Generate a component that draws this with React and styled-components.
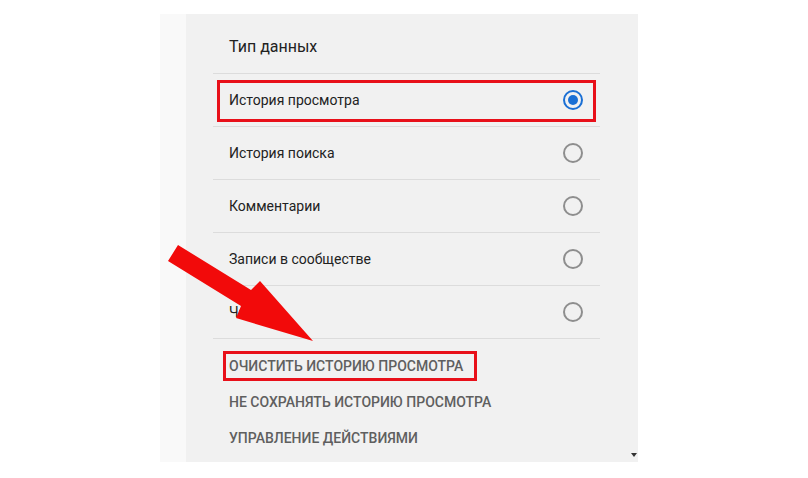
import React from "react";
import styled, { createGlobalStyle } from "styled-components";

const GlobalStyle = createGlobalStyle`
  html, body {
    margin: 0;
    padding: 0;
    background: #ffffff;
    font-family: Roboto, "Noto Sans", Arial, sans-serif;
  }
`;

const Page = styled.div`
  position: relative;
  width: 808px;
  height: 478px;
  padding: 14px 0 0 160px;
  box-sizing: border-box;
  overflow: hidden;
`;

const Panel = styled.div`
  position: relative;
  display: flex;
  width: 478px;
  height: 448px;
`;

const Strip = styled.div`
  width: 26px;
  background: #f9f9f9;
`;

const Main = styled.div`
  flex: 1;
  background: #f1f1f1;
  padding: 0 38px 0 27px;
  box-sizing: border-box;
`;

const Header = styled.div`
  height: 59px;
  display: flex;
  align-items: center;
  padding: 5px 16px 0;
  box-sizing: border-box;
  font-size: 16px;
  color: #222;
`;

const Row = styled.label`
  position: relative;
  height: 53px;
  display: flex;
  align-items: center;
  justify-content: space-between;
  padding: 0 17px 0 16px;
  border-top: 1px solid #dcdcdc;
  box-sizing: border-box;
  font-size: 14px;
  color: #222;

  ${(p) =>
    p.$marked &&
    `
    &::after {
      content: "";
      position: absolute;
      left: 4px;
      right: 4px;
      top: 6px;
      bottom: 4px;
      border: 3px solid #e8101a;
    }
  `}
`;

const LastRow = styled(Row)`
  border-bottom: 1px solid #dcdcdc;
  height: 54px;
`;

const Radio = styled.span`
  width: 20px;
  height: 20px;
  border-radius: 50%;
  box-sizing: border-box;
  border: ${(p) => (p.$on ? "2.5px solid #1a6fd4" : "2px solid #8e8e8e")};
  display: flex;
  align-items: center;
  justify-content: center;

  &::before {
    content: "";
    width: 10px;
    height: 10px;
    border-radius: 50%;
    background: ${(p) => (p.$on ? "#1a6fd4" : "transparent")};
  }
`;

const Actions = styled.div`
  display: flex;
  flex-direction: column;
  align-items: flex-start;
  padding: 9px 16px 0;
`;

const Action = styled.span`
  position: relative;
  height: 36px;
  line-height: 36px;
  font-size: 14px;
  font-weight: 500;
  color: #5f5f5f;
  text-transform: uppercase;

  ${(p) =>
    p.$marked &&
    `
    &::after {
      content: "";
      position: absolute;
      left: -6px;
      right: -14px;
      top: 3px;
      bottom: 3px;
      border: 3px solid #e8101a;
    }
  `}
`;

const ScrollArrow = styled.span`
  position: absolute;
  right: 1px;
  bottom: 5px;
  width: 0;
  height: 0;
  border-left: 3px solid transparent;
  border-right: 3px solid transparent;
  border-top: 4px solid #333;
`;

const Pointer = styled.svg`
  position: absolute;
  left: 0;
  top: 0;
  pointer-events: none;
`;

const types = [
  { label: "История просмотра", on: true },
  { label: "История поиска" },
  { label: "Комментарии" },
  { label: "Записи в сообществе" },
];

export default function App() {
  return (
    <>
      <GlobalStyle />
      <Page>
        <Panel>
          <Strip />
          <Main>
            <Header>Тип данных</Header>
            {types.map((t) => (
              <Row key={t.label} $marked={t.on}>
                {t.label}
                <Radio $on={t.on} />
              </Row>
            ))}
            <LastRow>
              Чаты
              <Radio />
            </LastRow>
            <Actions>
              <Action $marked>Очистить историю просмотра</Action>
              <Action>Не сохранять историю просмотра</Action>
              <Action>Управление действиями</Action>
            </Actions>
          </Main>
          <ScrollArrow />
        </Panel>
        <Pointer width="808" height="478" viewBox="0 0 808 478">
          <polygon
            points="178,245 251,290 260,281 313,341 236,318 241,306 168,261"
            fill="#f20a0a"
          />
        </Pointer>
      </Page>
    </>
  );
}
